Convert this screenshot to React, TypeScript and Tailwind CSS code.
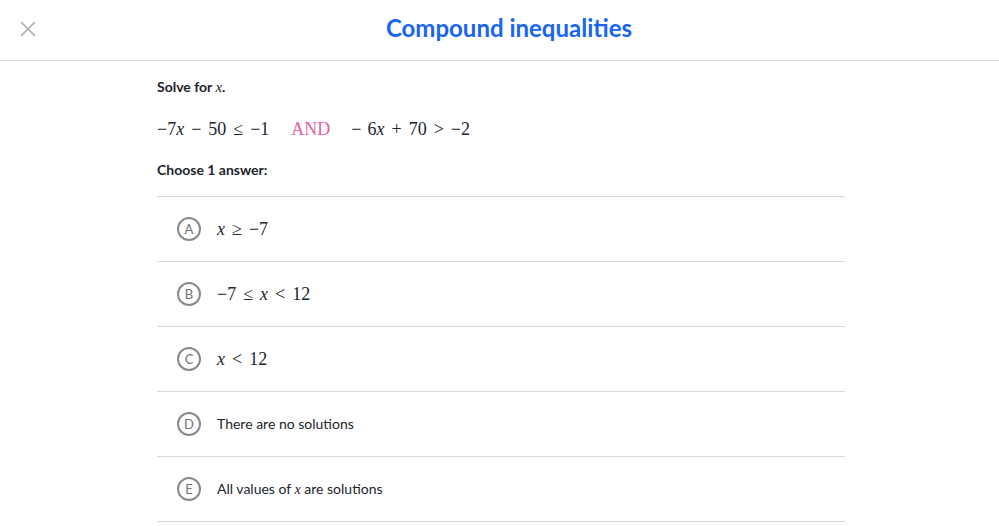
import React from 'react';

const M: React.FC<{ children: React.ReactNode }> = ({ children }) => (
  <span className="font-['Liberation_Serif',serif] italic">{children}</span>
);

const Serif: React.FC<{ children: React.ReactNode; className?: string }> = ({ children, className }) => (
  <span className={`font-['Liberation_Serif',serif] ${className ?? ''}`}>{children}</span>
);

// binary operator / relation with KaTeX-ish spacing
const Op: React.FC<{ children: React.ReactNode }> = ({ children }) => (
  <span className="mx-[7px]">{children}</span>
);

type Choice = { letter: string; content: React.ReactNode; math: boolean };

const choices: Choice[] = [
  { letter: 'A', math: true, content: <><M>x</M><Op>≥</Op>−7</> },
  { letter: 'B', math: true, content: <>−7<Op>≤</Op><M>x</M><Op>&lt;</Op>12</> },
  { letter: 'C', math: true, content: <><M>x</M><Op>&lt;</Op>12</> },
  { letter: 'D', math: false, content: <>There are no solutions</> },
  { letter: 'E', math: false, content: <>All values of <M>x</M> are solutions</> },
];

const App: React.FC = () => {
  return (
    <div className="min-h-screen bg-white text-[#21242c] font-['Lato',sans-serif]">
      {/* Header */}
      <header className="h-[61px] border-b border-[#dadbdd] flex items-center relative">
        <button className="absolute left-[19px] top-[20px] w-[18px] h-[18px] flex items-center justify-center">
          <svg width="16" height="16" viewBox="0 0 16 16" fill="none" stroke="#a9abae" strokeWidth="1.6" strokeLinecap="round">
            <path d="M1.5 1.5 L14.5 14.5 M14.5 1.5 L1.5 14.5" />
          </svg>
        </button>
        <h1 className="w-full text-center pl-[19px] text-[24px] font-bold text-[#1865f2] leading-none -mt-[4px]">
          Compound inequalities
        </h1>
      </header>

      <main className="ml-[157px] w-[688px] pt-[16px]">
        <p className="text-[14px] font-bold leading-[20px]">
          Solve for <M><span className="font-normal text-[15px]">x</span></M>.
        </p>

        <div className="mt-[19px] text-[18px] leading-[24px] flex items-center">
          <Serif>−7<M>x</M><Op>−</Op>50<Op>≤</Op>−1</Serif>
          <Serif className="ml-[22px] text-[#e0629e]">AND</Serif>
          <Serif className="ml-[21px]"><span className="mr-[6px]">−</span>6<M>x</M><Op>+</Op>70<Op>&gt;</Op>−2</Serif>
        </div>

        <p className="mt-[19px] text-[14px] font-bold leading-[20px]">Choose 1 answer:</p>

        <ul className="mt-[16px] border-t border-[#d6d8da]">
          {choices.map((c) => (
            <li key={c.letter} className="h-[65px] border-b border-[#d6d8da] flex items-center pl-[20px]">
              <span className="w-[24px] h-[24px] rounded-full border-2 border-[#888a8e] flex items-center justify-center text-[13px] text-[#6f7175] leading-none">
                {c.letter}
              </span>
              {c.math ? (
                <Serif className="ml-[16px] text-[18px] leading-[24px]">{c.content}</Serif>
              ) : (
                <span className="ml-[16px] text-[14px] leading-[20px]">{c.content}</span>
              )}
            </li>
          ))}
        </ul>
      </main>
    </div>
  );
};

export default App;
